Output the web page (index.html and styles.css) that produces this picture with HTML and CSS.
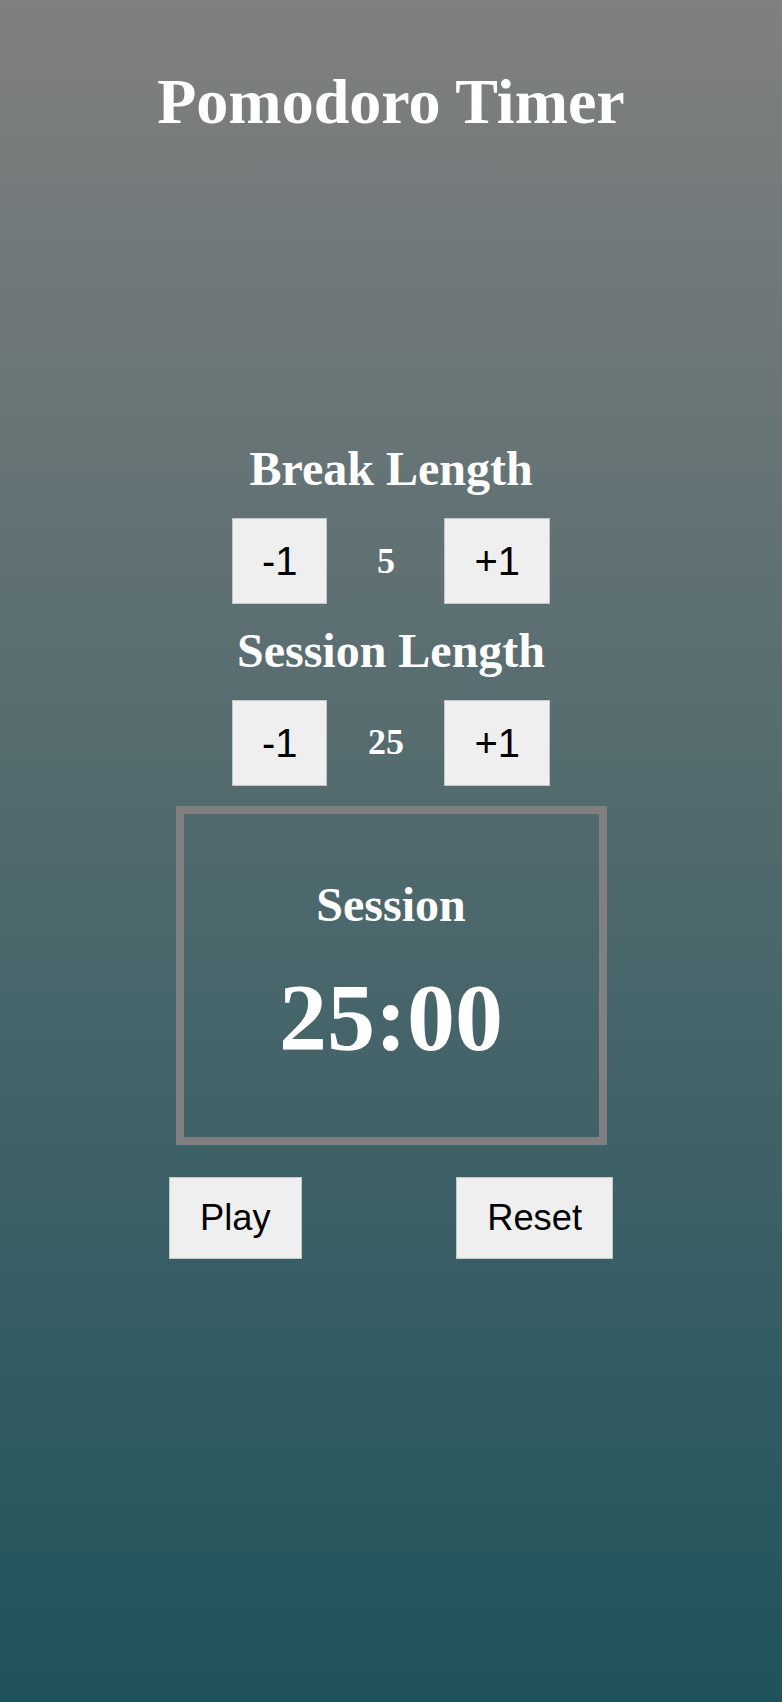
FILE: index.html
```html
<!DOCTYPE html>
<html lang="en">
<head>
<meta charset="utf-8">
<title>Pomodoro Timer</title>
<link rel="stylesheet" href="styles.css">
</head>
<body>
<main class="app">
  <h1 class="title">Pomodoro Timer</h1>

  <h2 class="label">Break Length</h2>
  <div class="row">
    <button class="btn step">-1</button>
    <span class="value">5</span>
    <button class="btn step">+1</button>
  </div>

  <h2 class="label label-gap">Session Length</h2>
  <div class="row">
    <button class="btn step">-1</button>
    <span class="value">25</span>
    <button class="btn step">+1</button>
  </div>

  <section class="timer">
    <h2 class="timer-label">Session</h2>
    <div class="time">25:00</div>
  </section>

  <div class="controls">
    <button class="btn ctrl">Play</button>
    <button class="btn ctrl">Reset</button>
  </div>
</main>
</body>
</html>
```

FILE: styles.css
```css
html, body {
  margin: 0;
  padding: 0;
  min-height: 100%;
}

body {
  min-height: 1702px;
  background: linear-gradient(to bottom, #808080 0%, #1f535b 100%);
  font-family: "Liberation Serif", "Times New Roman", serif;
  color: #ffffff;
}

.app {
  display: flex;
  flex-direction: column;
  align-items: center;
}

.title {
  margin: 64.6px 0 0;
  font-size: 64px;
  line-height: 1.15;
  font-weight: bold;
}

.label {
  margin: 303px 0 0;
  font-size: 48px;
  line-height: 1.15;
  font-weight: bold;
}

.label-gap {
  margin-top: 19px;
}

.row {
  display: flex;
  align-items: center;
  margin-top: 22px;
}

.label-gap + .row {
  margin-top: 21px;
}

.value {
  width: 117px;
  text-align: center;
  font-size: 36px;
  line-height: 1.15;
  font-weight: bold;
}

.btn {
  font-family: "Liberation Sans", Arial, sans-serif;
  color: #000000;
  background: #efefef;
  border: 1px solid #c6c6c6;
  border-radius: 0;
  padding: 19px 29px;
  line-height: 1.15;
  margin: 0;
}

.step {
  font-size: 40px;
}

.ctrl {
  font-size: 36.3px;
  padding: 19px 30px;
}

.timer {
  box-sizing: border-box;
  width: 431px;
  margin-top: 20px;
  border: 8px solid #808080;
  padding: 63px 0 64.2px;
  display: flex;
  flex-direction: column;
  align-items: center;
}

.timer-label {
  margin: 0;
  font-size: 48px;
  line-height: 1.15;
  font-weight: bold;
}

.time {
  margin-top: 31px;
  font-size: 96px;
  line-height: 1.15;
  font-weight: bold;
}

.controls {
  width: 444px;
  margin-top: 32px;
  display: flex;
  justify-content: space-between;
}
```
